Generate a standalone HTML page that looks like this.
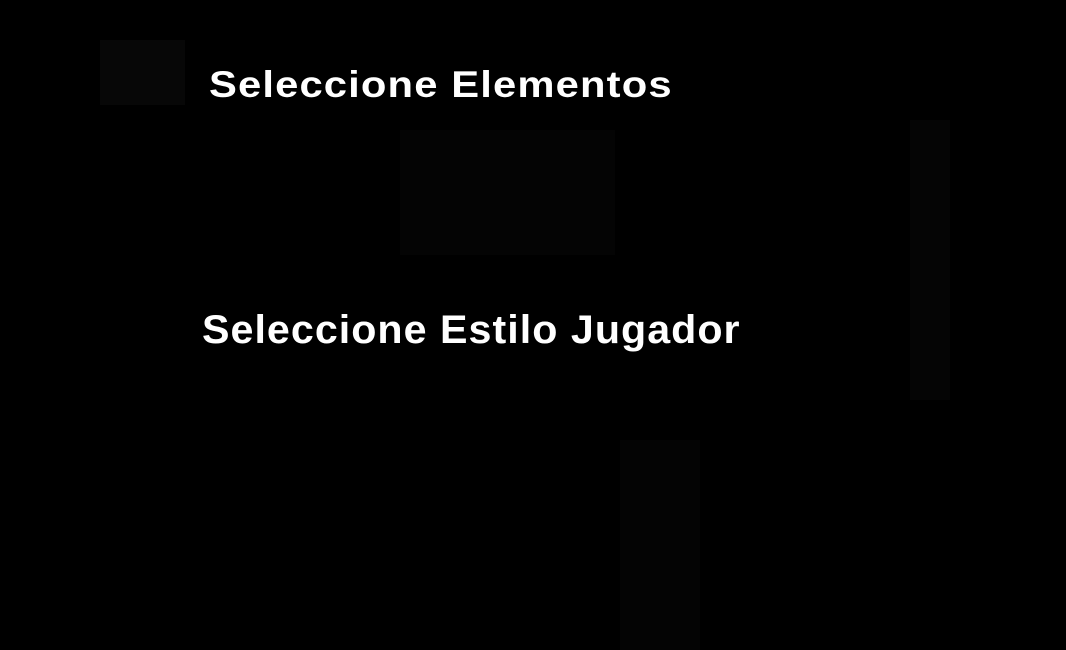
<!DOCTYPE html>
<html><head><style>
html,body{margin:0;padding:0;width:1066px;height:650px;background:#000;overflow:hidden}
.t{position:absolute;color:#fff;font-family:"Liberation Sans",sans-serif;font-weight:bold;letter-spacing:1px;white-space:nowrap}
.r{position:absolute}
</style></head><body>
<div class="r" style="left:400px;top:130px;width:215px;height:125px;background:#040404"></div>
<div class="r" style="left:910px;top:120px;width:40px;height:280px;background:#050505"></div>
<div class="r" style="left:620px;top:440px;width:80px;height:210px;background:#040404"></div>
<div class="r" style="left:100px;top:40px;width:85px;height:65px;background:#070707"></div>
<div class="t" style="left:209px;top:64px;font-size:37px;transform:scaleX(1.129);transform-origin:left">Seleccione Elementos</div>
<div class="t" style="left:202px;top:308px;font-size:40px;transform:scaleX(1.03);transform-origin:left">Seleccione Estilo Jugador</div>
</body></html>
